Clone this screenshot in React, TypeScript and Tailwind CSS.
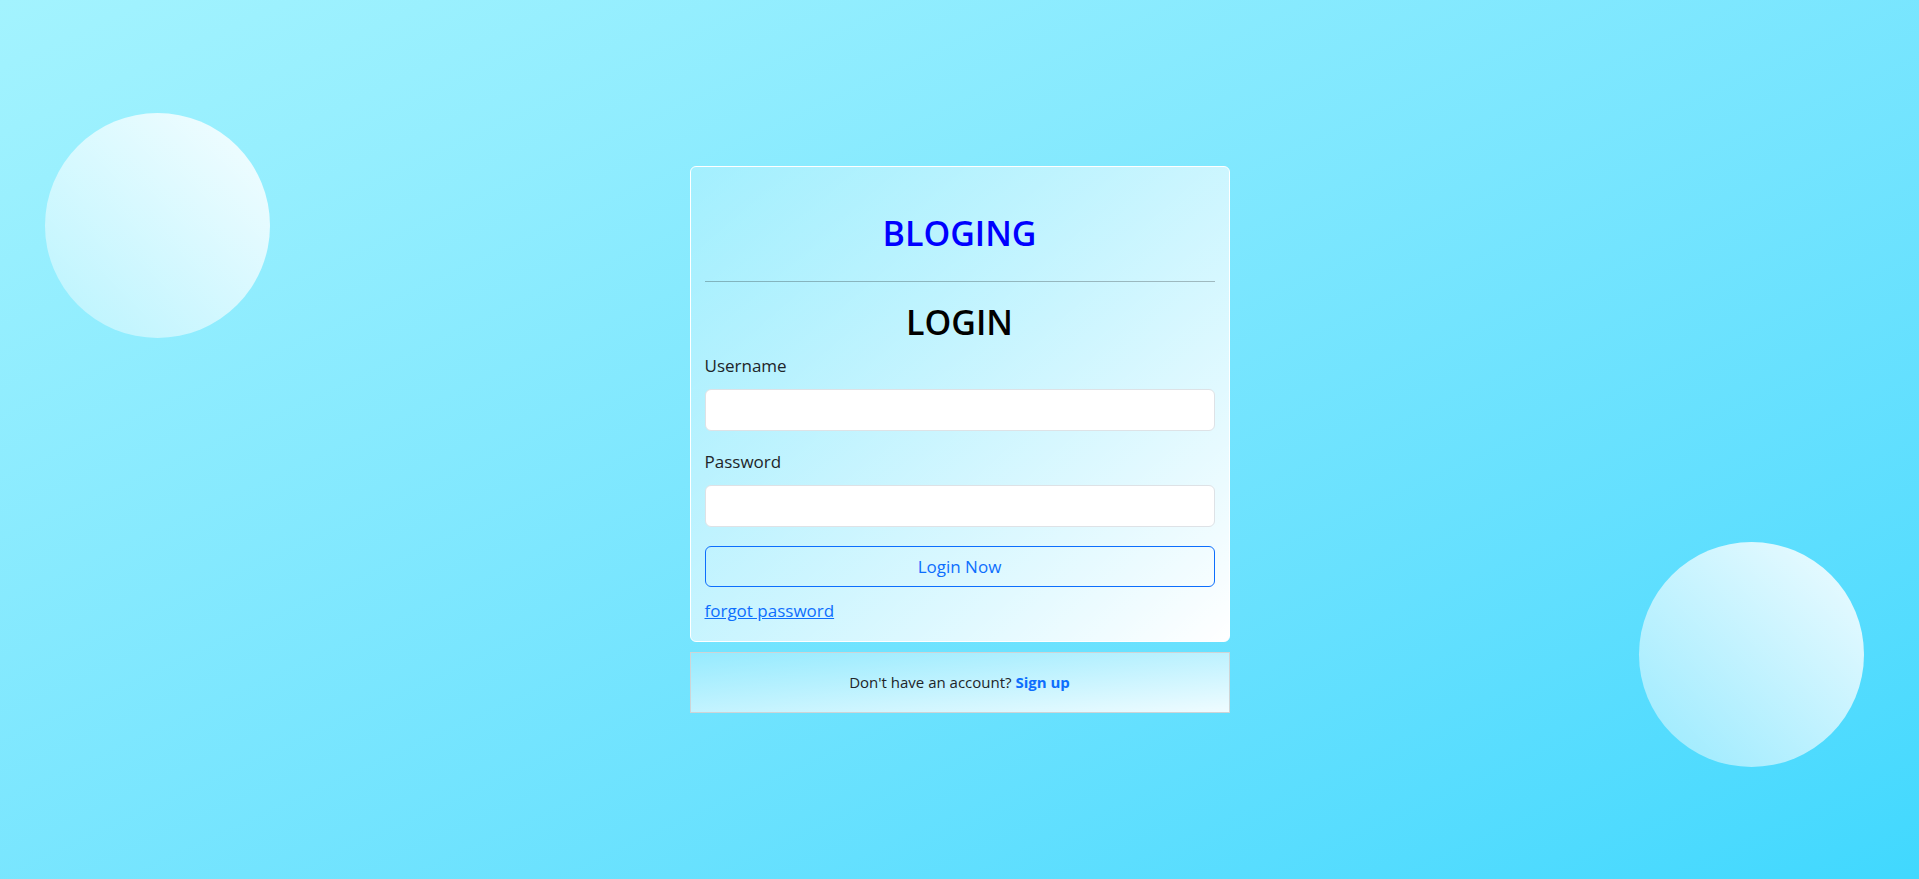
import React from "react"

export default function App() {
  return (
    <div
      className="relative h-[879px] w-full overflow-hidden bg-linear-to-br from-[#a3f3fe] to-[#40d8fe] flex items-center justify-center"
      style={{ fontFamily: '"Open Sans", "Noto Sans", sans-serif' }}
    >
      {/* decorative bubbles */}
      <div className="absolute left-[45px] top-[113px] w-[225px] h-[225px] rounded-full bg-linear-to-bl from-white/90 to-white/35" />
      <div className="absolute right-[55px] bottom-[112px] w-[225px] h-[225px] rounded-full bg-linear-to-bl from-white/90 to-white/40" />

      <div className="relative flex flex-col w-[540px]">
        {/* login card */}
        <div className="border border-white rounded-md bg-linear-to-br from-white/20 to-white px-[14px] pt-[45px] pb-[18px]">
          <h1 className="text-center text-[34px] leading-[42px] font-semibold text-[#0000ff]">BLOGING</h1>
          <hr className="mt-[27px] border-0 border-t border-black/25" />
          <h2 className="mt-[19px] text-center text-[34px] leading-[42px] font-semibold text-black">LOGIN</h2>

          <form className="flex flex-col" onSubmit={(e) => e.preventDefault()}>
            <label className="mt-[11px] text-[17px] leading-6 text-[#212529]">Username</label>
            <input
              type="text"
              className="mt-[11px] h-[42px] w-full rounded-md border border-[#dee2e6] bg-white px-3 outline-none"
            />
            <label className="mt-[19px] text-[17px] leading-6 text-[#212529]">Password</label>
            <input
              type="password"
              className="mt-[11px] h-[42px] w-full rounded-md border border-[#dee2e6] bg-white px-3 outline-none"
            />
            <button
              type="submit"
              className="mt-[19px] h-[41px] w-full rounded-md border border-[#0d6efd] text-[17px] text-[#0d6efd]"
            >
              Login Now
            </button>
            <div className="mt-[12px] text-[17px] leading-6">
              <a href="#" className="text-[#0d6efd] underline">
                forgot password
              </a>
            </div>
          </form>
        </div>

        {/* sign up footer */}
        <div className="mt-[10px] h-[61px] border border-[#cfd4d6] bg-linear-to-br from-white/25 to-white/90 flex items-center justify-center text-[15px] text-[#212529]">
          <span>
            Don't have an account?{" "}
            <a href="#" className="font-bold text-[#0d6efd]">
              Sign up
            </a>
          </span>
        </div>
      </div>
    </div>
  )
}
